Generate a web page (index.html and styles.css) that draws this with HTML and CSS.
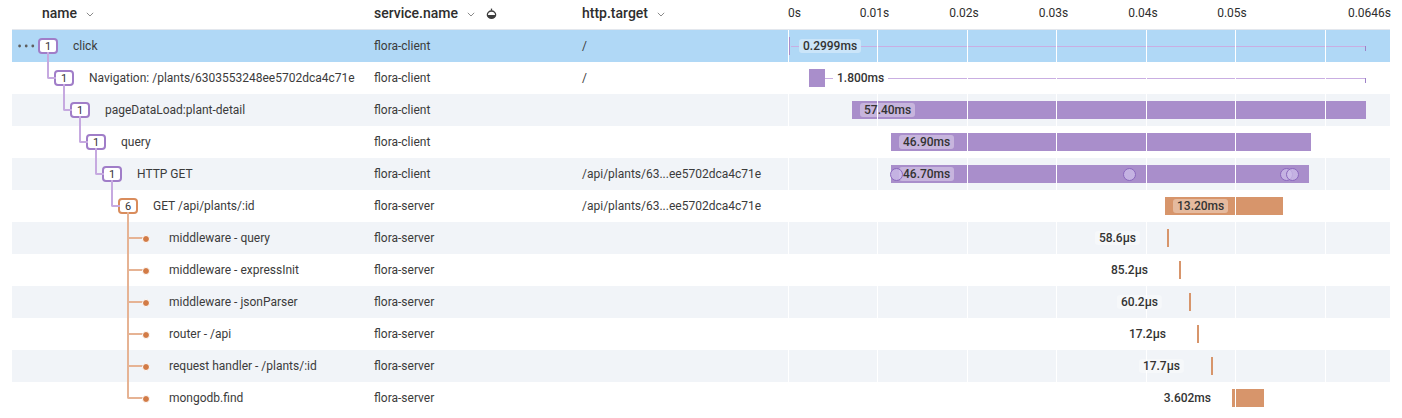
FILE: index.html
```html
<!DOCTYPE html>
<html lang="en">
<head>
<meta charset="utf-8">
<title>Trace</title>
<link rel="stylesheet" href="styles.css">
</head>
<body>
<div class="trace">
  <div class="thead">
    <div class="th th-name">name<svg class="chev" width="8" height="5" viewBox="0 0 8 5"><path d="M0.8 0.8 L4 4 L7.2 0.8" fill="none" stroke="#8a8a8a" stroke-width="1"/></svg></div>
    <div class="th th-svc">service.name<svg class="chev" width="8" height="5" viewBox="0 0 8 5"><path d="M0.8 0.8 L4 4 L7.2 0.8" fill="none" stroke="#8a8a8a" stroke-width="1"/></svg><svg class="drop" width="11" height="12" viewBox="0 0 11 12"><path d="M5.5 0.6 V2.6" stroke="#3d3d3d" stroke-width="1.3"/><path d="M1.3 7.2 A4.2 4.2 0 0 1 9.7 7.2" fill="none" stroke="#3d3d3d" stroke-width="1.3"/><path d="M0.8 7 H10.2 A4.7 4 0 0 1 0.8 7 Z" fill="#3d3d3d"/></svg></div>
    <div class="th th-tgt">http.target<svg class="chev" width="8" height="5" viewBox="0 0 8 5"><path d="M0.8 0.8 L4 4 L7.2 0.8" fill="none" stroke="#8a8a8a" stroke-width="1"/></svg></div>
    <div class="th th-axis">
      <span class="tick first">0s</span>
      <span class="tick" style="left:86.5px">0.01s</span>
      <span class="tick" style="left:176px">0.02s</span>
      <span class="tick" style="left:265.5px">0.03s</span>
      <span class="tick" style="left:355px">0.04s</span>
      <span class="tick" style="left:444px">0.05s</span>
      <span class="tick last">0.0646s</span>
    </div>
  </div>

  <div class="tbody">
    <div class="grid">
      <i style="left:0px"></i><i style="left:89px"></i><i style="left:179px"></i><i style="left:268px"></i><i style="left:358px"></i><i style="left:447px"></i><i style="left:537px"></i>
    </div>

    <div class="row selected">
      <div class="cell name d0"><svg class="more" width="17" height="4" viewBox="0 0 17 4"><circle cx="1.6" cy="2" r="1.4" fill="#5e5e5e"/><circle cx="8.2" cy="2" r="1.4" fill="#5e5e5e"/><circle cx="14.8" cy="2" r="1.4" fill="#5e5e5e"/></svg><span class="node p">1</span><span class="label">click</span></div>
      <div class="cell svc">flora-client</div>
      <div class="cell tgt">/</div>
      <div class="cell tl"><div class="track">
        <div class="bar p" style="left:0px;width:2px"></div>
        <div class="trail" style="left:3px"><i class="seg"></i><span class="chip">0.2999ms</span><i class="seg grow"></i></div>
      </div></div>
    </div>

    <div class="row">
      <div class="cell name d1"><span class="node p c1 cp">1</span><span class="label">Navigation: /plants/6303553248ee5702dca4c71e</span></div>
      <div class="cell svc">flora-client</div>
      <div class="cell tgt">/</div>
      <div class="cell tl"><div class="track">
        <div class="bar p" style="left:21px;width:16px"></div>
        <div class="trail" style="left:37px"><i class="seg"></i><span class="chip">1.800ms</span><i class="seg grow"></i></div>
      </div></div>
    </div>

    <div class="row alt">
      <div class="cell name d2"><span class="node p c1 cp">1</span><span class="label">pageDataLoad:plant-detail</span></div>
      <div class="cell svc">flora-client</div>
      <div class="cell tgt"></div>
      <div class="cell tl"><div class="track">
        <div class="bar p" style="left:64px;width:514px"></div>
        <span class="chip" style="left:72px">57.40ms</span>
      </div></div>
    </div>

    <div class="row">
      <div class="cell name d3"><span class="node p c1 cp">1</span><span class="label">query</span></div>
      <div class="cell svc">flora-client</div>
      <div class="cell tgt"></div>
      <div class="cell tl"><div class="track">
        <div class="bar p" style="left:103px;width:420px"></div>
        <span class="chip" style="left:111px">46.90ms</span>
      </div></div>
    </div>

    <div class="row alt">
      <div class="cell name d4"><span class="node p c1 cp">1</span><span class="label">HTTP GET</span></div>
      <div class="cell svc">flora-client</div>
      <div class="cell tgt">/api/plants/63...ee5702dca4c71e</div>
      <div class="cell tl"><div class="track">
        <div class="bar p" style="left:103px;width:418px"></div>
        <span class="chip" style="left:111px">46.70ms</span>
        <i class="evt" style="left:108px"></i>
        <i class="evt" style="left:341px"></i>
        <i class="evt" style="left:498.7px"></i>
        <i class="evt" style="left:504.7px"></i>
      </div></div>
    </div>

    <div class="row">
      <div class="cell name d5"><span class="node o c1 cp">6</span><span class="label">GET /api/plants/:id</span></div>
      <div class="cell svc">flora-server</div>
      <div class="cell tgt">/api/plants/63...ee5702dca4c71e</div>
      <div class="cell tl"><div class="track">
        <div class="bar o" style="left:377px;width:118px"></div>
        <span class="chip" style="left:385px">13.20ms</span>
      </div></div>
    </div>

    <div class="row alt">
      <div class="cell name d6"><span class="leaf c1 co"></span><span class="label">middleware - query</span></div>
      <div class="cell svc">flora-server</div>
      <div class="cell tgt"></div>
      <div class="cell tl"><div class="track">
        <div class="bar o" style="left:379px;width:2px"></div>
        <span class="chip before" style="left:352px">58.6μs</span>
      </div></div>
    </div>

    <div class="row">
      <div class="cell name d6"><span class="leaf cs co"></span><span class="label">middleware - expressInit</span></div>
      <div class="cell svc">flora-server</div>
      <div class="cell tgt"></div>
      <div class="cell tl"><div class="track">
        <div class="bar o" style="left:391px;width:2px"></div>
        <span class="chip before" style="left:364px">85.2μs</span>
      </div></div>
    </div>

    <div class="row alt">
      <div class="cell name d6"><span class="leaf cs co"></span><span class="label">middleware - jsonParser</span></div>
      <div class="cell svc">flora-server</div>
      <div class="cell tgt"></div>
      <div class="cell tl"><div class="track">
        <div class="bar o" style="left:401px;width:2px"></div>
        <span class="chip before" style="left:374px">60.2μs</span>
      </div></div>
    </div>

    <div class="row">
      <div class="cell name d6"><span class="leaf cs co"></span><span class="label">router - /api</span></div>
      <div class="cell svc">flora-server</div>
      <div class="cell tgt"></div>
      <div class="cell tl"><div class="track">
        <div class="bar o" style="left:409px;width:2px"></div>
        <span class="chip before" style="left:382px">17.2μs</span>
      </div></div>
    </div>

    <div class="row alt">
      <div class="cell name d6"><span class="leaf cs co"></span><span class="label">request handler - /plants/:id</span></div>
      <div class="cell svc">flora-server</div>
      <div class="cell tgt"></div>
      <div class="cell tl"><div class="track">
        <div class="bar o" style="left:423px;width:2px"></div>
        <span class="chip before" style="left:396px">17.7μs</span>
      </div></div>
    </div>

    <div class="row">
      <div class="cell name d6"><span class="leaf cs co"></span><span class="label">mongodb.find</span></div>
      <div class="cell svc">flora-server</div>
      <div class="cell tgt"></div>
      <div class="cell tl"><div class="track">
        <div class="bar o" style="left:444px;width:32px"></div>
        <span class="chip before" style="left:427px">3.602ms</span>
      </div></div>
    </div>
  </div>
</div>
</body>
</html>
```

FILE: styles.css
```css
* { box-sizing: border-box; }

html, body {
  margin: 0;
  background: #ffffff;
}

body {
  font-family: Roboto, "Liberation Sans", Arial, sans-serif;
  font-size: 12px;
  color: #3b3b3b;
}

.trace {
  width: 1390px;
  padding-left: 12px;
}

.thead,
.row {
  display: grid;
  grid-template-columns: 350px 208px 218px 602px;
}

/* ---------- header ---------- */
.thead {
  height: 30px;
  padding-bottom: 3px;
  border-bottom: 1px solid #e3e7ed;
  font-size: 14px;
  font-weight: 500;
  color: #2e2e2e;
}

.th {
  display: flex;
  align-items: center;
  height: 100%;
  white-space: nowrap;
}

.th-name { padding-left: 30px; }
.th-svc,
.th-tgt { padding-left: 12px; }

.chev {
  margin-left: 9px;
  margin-top: 2px;
  flex: none;
}

.drop {
  margin-left: 11px;
  margin-top: 1px;
  flex: none;
}

.th-axis {
  position: relative;
  font-size: 12px;
  font-weight: 400;
  color: #2e2e2e;
}

.tick {
  position: absolute;
  top: 50%;
  transform: translate(-50%, -50%);
  white-space: nowrap;
}

.tick.first {
  left: 0;
  transform: translateY(-50%);
}

.tick.last {
  right: -1px;
  transform: translateY(-50%);
}

/* ---------- body ---------- */
.tbody {
  position: relative;
}

.grid {
  position: absolute;
  top: 0;
  bottom: 0;
  left: 776px;
  width: 578px;
  z-index: 1;
  pointer-events: none;
}

.grid i {
  position: absolute;
  top: 0;
  bottom: 0;
  width: 1px;
  background: #ffffff;
}

.row {
  height: 32px;
}

.row.alt { background: #f1f4f8; }
.row.selected { background: #b0d8f6; }

.cell {
  display: flex;
  align-items: center;
  height: 100%;
  white-space: nowrap;
}

.cell.svc,
.cell.tgt { padding-left: 12px; }

/* tree */
.name.d0 { padding-left: 26px; }
.name.d1 { padding-left: 42px; }
.name.d2 { padding-left: 58px; }
.name.d3 { padding-left: 74px; }
.name.d4 { padding-left: 90px; }
.name.d5 { padding-left: 106px; }
.name.d6 { padding-left: 122px; }

.more {
  width: 17px;
  margin-left: -20px;
  margin-right: 3px;
  flex: none;
}

.node {
  position: relative;
  flex: none;
  width: 20px;
  height: 16px;
  border: 2px solid;
  border-radius: 4px;
  background: #ffffff;
  display: flex;
  align-items: center;
  justify-content: center;
  font-size: 11px;
  line-height: 1;
  color: #333333;
}

.node.p { border-color: #a07dc8; }
.node.o { border-color: #d98c5c; }

.leaf {
  position: relative;
  flex: none;
  width: 20px;
  height: 16px;
}

.leaf::after {
  content: "";
  position: absolute;
  left: 8px;
  top: 5px;
  width: 6px;
  height: 6px;
  border-radius: 50%;
  border: 1px solid #ffffff;
  background: #d27b46;
}

/* connectors */
.node.c1::before,
.node.cs::before,
.leaf.c1::before,
.leaf.cs::before {
  content: "";
  position: absolute;
  border-left: 2px solid #c6a9e0;
  border-bottom: 2px solid #c6a9e0;
  border-bottom-left-radius: 2px;
}

.node.c1::before,
.node.cs::before {
  left: -9px;
  bottom: 5px;
  width: 7px;
}

.leaf.c1::before,
.leaf.cs::before {
  left: -7px;
  bottom: 7px;
  width: 15px;
}

.node.c1::before,
.leaf.c1::before { height: 25px; }
.node.cs::before,
.leaf.cs::before { height: 33px; }

.node.cp::before,
.leaf.cp::before { border-color: #c6a9e0; }
.node.co::before,
.leaf.co::before { border-color: #e6b394; }

.label {
  margin-left: 15px;
  color: #3b3b3b;
}

/* timeline */
.cell.tl {
  padding-right: 24px;
}

.track {
  position: relative;
  flex: 1;
  height: 100%;
}

.bar {
  position: absolute;
  top: 7px;
  height: 18px;
}

.bar.p { background: #a98ecb; }
.bar.o { background: #d7956b; }

.chip {
  position: absolute;
  top: 9px;
  height: 14px;
  line-height: 14px;
  padding: 0 4px;
  border-radius: 3px;
  background: rgba(255, 255, 255, 0.35);
  font-size: 12px;
  font-weight: 500;
  color: #333333;
  white-space: nowrap;
  z-index: 2;
}

.chip.before {
  transform: translateX(-100%);
}

.trail {
  position: absolute;
  top: 0;
  bottom: 0;
  right: 0;
  display: flex;
  align-items: center;
}

.trail .chip {
  position: relative;
  top: auto;
}

.seg {
  display: block;
  flex: none;
  width: 8px;
  height: 1px;
  background: #c9aee2;
}

.seg.grow {
  flex: 1;
  position: relative;
}

.seg.grow::after {
  content: "";
  position: absolute;
  right: 0;
  top: 0;
  width: 1px;
  height: 5px;
  background: #9d82c8;
}

.evt {
  position: absolute;
  top: 50%;
  width: 13px;
  height: 13px;
  margin: -6.5px 0 0 -6.5px;
  border-radius: 50%;
  border: 1px solid #8a67bd;
  background: rgba(206, 190, 233, 0.75);
  z-index: 3;
}
```
